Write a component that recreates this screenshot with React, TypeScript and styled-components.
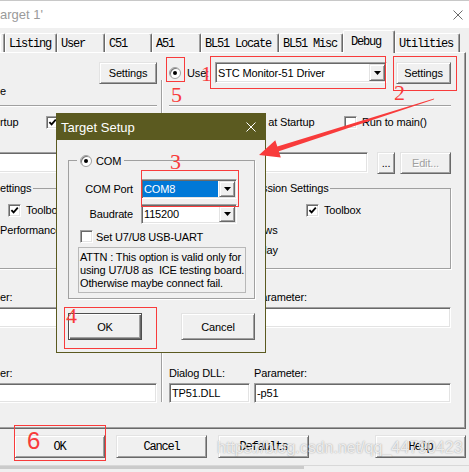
import React from 'react';
import styled, { createGlobalStyle, css } from 'styled-components';

const UI = '"Liberation Sans", Arial, sans-serif';
const MONO = '"Liberation Mono", "Courier New", monospace';
const SERIF = '"Liberation Serif", "Times New Roman", serif';
const RED = '#f83b3b';
const OLIVE = '#5b5a20';

const GlobalStyle = createGlobalStyle`
  html, body { margin: 0; padding: 0; background: #f0f0f0; }
  *, *::before, *::after { box-sizing: border-box; }
`;

const Screen = styled.div`
  position: relative;
  width: 469px;
  height: 472px;
  overflow: hidden;
  display: flex;
  flex-direction: column;
  background: #f0f0f0;
  color: #000;
  font-family: ${UI};
  font-size: 11px;
  letter-spacing: -0.15px;
`;

/* ---------- options window ---------- */

const TitleBar = styled.div`
  flex: none;
  height: 28px;
  display: flex;
  align-items: center;
  justify-content: space-between;
  padding-right: 6px;
  background: #fff;
  border-top: 1px solid #c8c8c8;
  color: #9a9a9a;
  font-size: 13px;
  letter-spacing: 0;
`;

const TabStrip = styled.div`
  flex: none;
  height: 22px;
  margin-top: 2px;
  display: flex;
  align-items: flex-end;
`;

const Tab = styled.div<{ $w: number; $active?: boolean }>`
  position: relative;
  z-index: ${p => (p.$active ? 1 : 0)};
  flex: none;
  width: ${p => p.$w}px;
  height: ${p => (p.$active ? 23 : 19)}px;
  margin-bottom: ${p => (p.$active ? -1 : 0)}px;
  display: flex;
  align-items: center;
  padding: ${p => (p.$active ? '0 0 0 7px' : '1px 0 0 3px')};
  background: #f0f0f0;
  border: 1px solid;
  border-bottom: none;
  border-color: #fff #696969 transparent #fff;
  border-radius: 2px 2px 0 0;
  box-shadow: inset -1px 0 0 #a0a0a0;
  font-family: ${MONO};
  font-size: 12px;
  letter-spacing: -1.2px;
  white-space: nowrap;
`;

const TabPage = styled.div`
  flex: none;
  width: 466px;
  height: 377px;
  display: grid;
  grid-template-columns: 161px 2px 1fr;
  border-top: 1px solid #fff;
  border-right: 1px solid #696969;
  border-bottom: 1px solid #696969;
  box-shadow: inset -1px -1px 0 #a0a0a0;
`;

const Column = styled.div<{ $left: number; $right: number }>`
  min-width: 0;
  display: flex;
  flex-direction: column;
  padding: 8px ${p => p.$right}px 0 ${p => p.$left}px;
`;

const Divider = styled.div`
  margin: 27px 0 26px;
  border-left: 1px solid #a0a0a0;
  border-right: 1px solid #fff;
`;

const UseRow = styled.div`
  flex: none;
  height: 23px;
  display: flex;
  align-items: center;
`;

const LimitRow = styled.div`
  flex: none;
  height: 14px;
  display: flex;
  align-items: center;
  white-space: nowrap;
`;

const Separator = styled.div`
  flex: none;
  height: 2px;
  margin-top: 7px;
  border-top: 1px solid #a0a0a0;
  border-bottom: 1px solid #fff;
`;

const CheckRow = styled.div<{ $first: number }>`
  flex: none;
  height: 18px;
  margin-top: 6px;
  display: grid;
  grid-template-columns: ${p => p.$first}px auto;
  align-items: center;
  white-space: nowrap;
`;

const InitLabel = styled.div`
  flex: none;
  height: 21px;
  display: flex;
  align-items: flex-end;
  padding-bottom: 3px;
  white-space: nowrap;
`;

const InitFieldRow = styled.div`
  flex: none;
  height: 22px;
  display: flex;
  align-items: flex-start;
`;

const GroupBox = styled.fieldset<{ $bleed?: boolean }>`
  flex: none;
  min-width: 0;
  margin: 7px 0 0 ${p => (p.$bleed ? -5 : 0)}px;
  padding: 4px 0 8px 2px;
  border: 1px solid #a0a0a0;
  box-shadow: 1px 1px 0 #fff;
`;

const Legend = styled.legend`
  padding: 0 2px;
  line-height: 15px;
  white-space: nowrap;
`;

const GroupRow = styled.div<{ $indent: number; $cols?: string }>`
  height: 20px;
  display: grid;
  grid-template-columns: ${p => p.$cols ?? 'auto'};
  align-items: center;
  padding-left: ${p => p.$indent}px;
  white-space: nowrap;
`;

const ParamGrid = styled.div<{ $cols: string; $top: number; $fieldH: number }>`
  flex: none;
  display: grid;
  grid-template-columns: ${p => p.$cols};
  grid-template-rows: 14px ${p => p.$fieldH}px;
  column-gap: 4px;
  row-gap: 3px;
  margin-top: ${p => p.$top}px;
  align-items: center;
  white-space: nowrap;
`;

const Field = styled.div<{ $bleed?: boolean; $h?: number }>`
  flex: 1;
  min-width: 0;
  align-self: stretch;
  ${p => p.$h && css`height: ${p.$h}px; align-self: flex-start;`}
  margin-left: ${p => (p.$bleed ? -3 : 0)}px;
  display: flex;
  align-items: center;
  padding: 0 2px;
  background: #fff;
  border: 1px solid;
  border-color: #a0a0a0 #fff #fff #a0a0a0;
  box-shadow: inset 1px 1px 0 #696969, inset -1px -1px 0 #e3e3e3;
  white-space: nowrap;
  overflow: hidden;
`;

const Button = styled.button<{
  $w: number;
  $h?: number;
  $gap?: number;
  $push?: boolean;
  $mono?: boolean;
  $default?: boolean;
  $disabled?: boolean;
}>`
  flex: none;
  width: ${p => p.$w}px;
  height: ${p => (p.$h ? `${p.$h}px` : 'auto')};
  margin: 0 0 0 ${p => (p.$push ? 'auto' : `${p.$gap ?? 0}px`)};
  padding: 0;
  display: flex;
  align-items: center;
  justify-content: center;
  background: #f0f0f0;
  border: 1px solid;
  border-color: #e3e3e3 #696969 #696969 #e3e3e3;
  box-shadow: inset 1px 1px 0 #fff, inset -1px -1px 0 #a0a0a0;
  font-family: ${p => (p.$mono ? MONO : UI)};
  font-size: ${p => (p.$mono ? 12 : 11)}px;
  letter-spacing: ${p => (p.$mono ? -1.2 : -0.15)}px;
  color: ${p => (p.$disabled ? '#a0a0a0' : '#000')};
  text-shadow: ${p => (p.$disabled ? '1px 1px 0 #fff' : 'none')};
  white-space: nowrap;
  ${p =>
    p.$default &&
    css`
      border-color: #4e4e4e;
      box-shadow: inset 1px 1px 0 #fff, inset -1px -1px 0 #696969, inset -2px -2px 0 #a0a0a0;
    `}
`;

const ButtonBar = styled.div`
  flex: none;
  height: 23px;
  margin-top: 6px;
  display: flex;
  gap: 11px;
  padding: 0 3px 0 14px;
`;

const Footer = styled.div`
  flex: none;
  height: 5px;
  margin-top: 7px;
  border-top: 1px solid #d8d8d8;
`;

const ScrollThumb = styled.div`
  width: 304px;
  height: 3px;
  background: #cbcbcb;
`;

/* ---------- controls ---------- */

const CheckItem = styled.span`
  display: flex;
  align-items: center;
  gap: 5px;
  white-space: nowrap;
`;

const CheckBox = styled.span`
  flex: none;
  width: 13px;
  height: 13px;
  display: inline-flex;
  align-items: center;
  justify-content: center;
  background: #fff;
  border: 1px solid;
  border-color: #a0a0a0 #fff #fff #a0a0a0;
  box-shadow: inset 1px 1px 0 #696969, inset -1px -1px 0 #e3e3e3;
`;

function Check({ checked }: { checked?: boolean }) {
  return (
    <CheckBox>
      {checked && (
        <svg width="9" height="9" viewBox="0 0 9 9">
          <path d="M1.4 4.1 L3.6 6.4 L7.8 1.7" fill="none" stroke="#000" strokeWidth="1.8" />
        </svg>
      )}
    </CheckBox>
  );
}

const Radio = styled.span<{ $on?: boolean }>`
  flex: none;
  width: 12px;
  height: 12px;
  border-radius: 50%;
  display: inline-flex;
  align-items: center;
  justify-content: center;
  background: #fff;
  border: 1px solid #a0a0a0;
  box-shadow: inset 1px 1px 0 #7a7a7a;
  &::after {
    content: '';
    display: ${p => (p.$on ? 'block' : 'none')};
    width: 4px;
    height: 4px;
    border-radius: 50%;
    background: #000;
  }
`;

const RadioLabel = styled.span`
  flex: none;
  width: 46px;
  display: flex;
  align-items: center;
  gap: 6px;
`;

const ComboFrame = styled.div<{ $w: number; $h: number }>`
  flex: none;
  width: ${p => p.$w}px;
  height: ${p => p.$h}px;
  display: flex;
  padding: 1px;
  background: #fff;
  border: 1px solid;
  border-color: #a0a0a0 #fff #fff #a0a0a0;
  box-shadow: inset 1px 1px 0 #696969, inset -1px -1px 0 #e3e3e3;
`;

const ComboValue = styled.div<{ $selected?: boolean }>`
  flex: 1;
  min-width: 0;
  display: flex;
  align-items: center;
  padding-left: 1px;
  margin-right: 1px;
  white-space: nowrap;
  overflow: hidden;
  background: ${p => (p.$selected ? '#0078d7' : 'transparent')};
  color: ${p => (p.$selected ? '#fff' : '#000')};
`;

const DropButton = styled.div`
  flex: none;
  width: 16px;
  display: flex;
  align-items: center;
  justify-content: center;
  background: #f0f0f0;
  border: 1px solid;
  border-color: #e3e3e3 #696969 #696969 #e3e3e3;
  box-shadow: inset 1px 1px 0 #fff, inset -1px -1px 0 #a0a0a0;
`;

function Combo({ w, h, value, selected }: { w: number; h: number; value: string; selected?: boolean }) {
  return (
    <ComboFrame $w={w} $h={h}>
      <ComboValue $selected={selected}>{value}</ComboValue>
      <DropButton>
        <svg width="7" height="4" viewBox="0 0 7 4">
          <path d="M0 0H7L3.5 4Z" fill="#000" />
        </svg>
      </DropButton>
    </ComboFrame>
  );
}

function CloseIcon({ color }: { color: string }) {
  return (
    <svg width="10" height="10" viewBox="0 0 10 10">
      <path d="M0.5 0.5L9.5 9.5M9.5 0.5L0.5 9.5" stroke={color} strokeWidth="1" />
    </svg>
  );
}

/* ---------- target setup dialog ---------- */

const Dialog = styled.div`
  position: absolute;
  left: 56px;
  top: 113px;
  z-index: 5;
  width: 210px;
  display: flex;
  flex-direction: column;
  background: #f0f0f0;
  border: 1px solid ${OLIVE};
`;

const DialogTitle = styled.div`
  height: 26px;
  display: flex;
  align-items: center;
  justify-content: space-between;
  padding: 0 9px 0 4px;
  background: ${OLIVE};
  color: #fff;
  font-size: 13px;
  letter-spacing: 0;
`;

const DialogBody = styled.div`
  display: flex;
  flex-direction: column;
  padding: 13px 10px 12px 11px;
`;

const ComGroup = styled.fieldset`
  min-width: 0;
  margin: 0;
  padding: 11px 8px 5px 10px;
  border: 1px solid #a0a0a0;
  box-shadow: 1px 1px 0 #fff;
`;

const ComLegend = styled.legend`
  display: flex;
  align-items: center;
  gap: 4px;
  height: 15px;
  margin-left: -2px;
  padding: 0 3px;
`;

const FormGrid = styled.div`
  display: grid;
  grid-template-columns: 54px 96px;
  grid-auto-rows: 20px;
  column-gap: 8px;
  row-gap: 5px;
  align-items: center;
`;

const FormLabel = styled.span`
  text-align: right;
  white-space: nowrap;
`;

const DialogCheckRow = styled.div`
  height: 15px;
  margin-top: 5px;
  padding-left: 1px;
  display: flex;
  align-items: center;
  gap: 3px;
  white-space: nowrap;
`;

const NoteBox = styled.div`
  margin: 3px 0 0 -1px;
  padding: 3px 1px 2px;
  border: 1px solid #b8b8b8;
  line-height: 13px;
  white-space: pre;
`;

const DialogButtons = styled.div`
  display: flex;
  justify-content: space-between;
  margin-top: 14px;
`;

/* ---------- annotations ---------- */

const Mark = styled.div<{ $x: number; $y: number; $w: number; $h: number }>`
  position: absolute;
  z-index: 10;
  left: ${p => p.$x}px;
  top: ${p => p.$y}px;
  width: ${p => p.$w}px;
  height: ${p => p.$h}px;
  border: 1px solid ${RED};
  pointer-events: none;
`;

const Numeral = styled.span<{ $x: number; $y: number; $sans?: boolean }>`
  position: absolute;
  z-index: 10;
  left: ${p => p.$x}px;
  top: ${p => p.$y}px;
  font-family: ${p => (p.$sans ? UI : SERIF)};
  font-size: ${p => (p.$sans ? 24 : 22)}px;
  line-height: 1;
  letter-spacing: 0;
  color: ${RED};
`;

const ArrowLayer = styled.svg`
  position: absolute;
  left: 0;
  top: 0;
  z-index: 11;
  pointer-events: none;
`;

const Watermark = styled.div`
  position: absolute;
  left: 217px;
  top: 440px;
  z-index: 12;
  font-family: ${UI};
  font-size: 16px;
  line-height: 16px;
  letter-spacing: 0;
  white-space: nowrap;
  color: rgba(255, 255, 255, 0.78);
  text-shadow: 0 0 1.5px rgba(0, 0, 0, 0.4);
`;

const TABS = [
  { label: 'Listing', w: 52 },
  { label: 'User', w: 48 },
  { label: 'C51', w: 47 },
  { label: 'A51', w: 49 },
  { label: 'BL51 Locate', w: 78 },
  { label: 'BL51 Misc', w: 64 },
  { label: 'Debug', w: 52, active: true },
  { label: 'Utilities', w: 65 },
];

const MARKS = [
  { x: 166, y: 57, w: 19, h: 25 },
  { x: 210, y: 56, w: 176, h: 33 },
  { x: 393, y: 56, w: 64, h: 35 },
  { x: 141, y: 170, w: 98, h: 37 },
  { x: 64, y: 307, w: 93, h: 42 },
  { x: 14, y: 425, w: 92, h: 36 },
];

export default function App() {
  return (
    <>
      <GlobalStyle />
      <Screen>
        <TitleBar>
          <span>arget 1'</span>
          <CloseIcon color="#6b6b6b" />
        </TitleBar>

        <TabStrip>
          <Tab $w={3} />
          {TABS.map(t => (
            <Tab key={t.label} $w={t.w} $active={t.active}>
              {t.label}
            </Tab>
          ))}
        </TabStrip>

        <TabPage>
          <Column $left={0} $right={4}>
            <UseRow>
              <Button $w={58} $h={22} $push>Settings</Button>
            </UseRow>
            <LimitRow>e</LimitRow>
            <Separator />
            <CheckRow $first={46}>
              <span>rtup</span>
              <CheckItem>
                <Check checked />
                Run to main()
              </CheckItem>
            </CheckRow>
            <InitLabel />
            <InitFieldRow>
              <Field $bleed $h={21} />
              <Button $w={18} $h={22} $gap={9}>...</Button>
              <Button $w={51} $h={22} $gap={5} $disabled>Edit...</Button>
            </InitFieldRow>
            <GroupBox $bleed>
              <Legend>ettings</Legend>
              <GroupRow $indent={10}>
                <CheckItem>
                  <Check checked />
                  Toolbox
                </CheckItem>
              </GroupRow>
              <GroupRow $indent={2}>Performance Analyzer</GroupRow>
              <GroupRow $indent={2} />
            </GroupBox>
            <ParamGrid $cols="1fr" $top={21} $fieldH={21}>
              <span>er:</span>
              <Field $bleed />
            </ParamGrid>
            <ParamGrid $cols="1fr" $top={38} $fieldH={20}>
              <span>er:</span>
              <Field $bleed />
            </ParamGrid>
          </Column>

          <Divider />

          <Column $left={6} $right={14}>
            <UseRow>
              <RadioLabel>
                <Radio $on />
                Use:
              </RadioLabel>
              <Combo w={172} h={21} value="STC Monitor-51 Driver" />
              <Button $w={55} $h={22} $push>Settings</Button>
            </UseRow>
            <LimitRow />
            <Separator />
            <CheckRow $first={175}>
              <CheckItem>
                <Check checked />
                Load Application at Startup
              </CheckItem>
              <CheckItem>
                <Check />
                Run to main()
              </CheckItem>
            </CheckRow>
            <InitLabel>Initialization File:</InitLabel>
            <InitFieldRow>
              <Field $h={21} />
              <Button $w={18} $h={22} $gap={9}>...</Button>
              <Button $w={51} $h={22} $gap={5} $disabled>Edit...</Button>
            </InitFieldRow>
            <GroupBox>
              <Legend>Restore Debug Session Settings</Legend>
              <GroupRow $indent={11} $cols="123px auto">
                <CheckItem>
                  <Check checked />
                  Breakpoints
                </CheckItem>
                <CheckItem>
                  <Check checked />
                  Toolbox
                </CheckItem>
              </GroupRow>
              <GroupRow $indent={11}>
                <CheckItem>
                  <Check checked />
                  Watch Windows
                </CheckItem>
              </GroupRow>
              <GroupRow $indent={11}>
                <CheckItem>
                  <Check checked />
                  Memory Display
                </CheckItem>
              </GroupRow>
            </GroupBox>
            <ParamGrid $cols="81px 1fr" $top={21} $fieldH={21}>
              <span>CPU DLL:</span>
              <span>Parameter:</span>
              <Field>S8051.DLL</Field>
              <Field />
            </ParamGrid>
            <ParamGrid $cols="81px 1fr" $top={38} $fieldH={20}>
              <span>Dialog DLL:</span>
              <span>Parameter:</span>
              <Field>TP51.DLL</Field>
              <Field>-p51</Field>
            </ParamGrid>
          </Column>
        </TabPage>

        <ButtonBar>
          <Button $w={91} $mono>OK</Button>
          <Button $w={91} $mono>Cancel</Button>
          <Button $w={91} $mono>Defaults</Button>
          <Button $w={91} $mono $push>Help</Button>
        </ButtonBar>
        <Footer>
          <ScrollThumb />
        </Footer>

        <Dialog>
          <DialogTitle>
            <span>Target Setup</span>
            <CloseIcon color="#fff" />
          </DialogTitle>
          <DialogBody>
            <ComGroup>
              <ComLegend>
                <Radio $on />
                COM
              </ComLegend>
              <FormGrid>
                <FormLabel>COM Port</FormLabel>
                <Combo w={96} h={20} value="COM8" selected />
                <FormLabel>Baudrate</FormLabel>
                <Combo w={96} h={20} value="115200" />
              </FormGrid>
              <DialogCheckRow>
                <Check />
                Set U7/U8 USB-UART
              </DialogCheckRow>
              <NoteBox>
                <div>ATTN : This option is valid only for</div>
                <div>using U7/U8 as  ICE testing board.</div>
                <div>Otherwise maybe connect fail.</div>
              </NoteBox>
            </ComGroup>
            <DialogButtons>
              <Button $w={74} $h={27} $default>OK</Button>
              <Button $w={74} $h={27}>Cancel</Button>
            </DialogButtons>
          </DialogBody>
        </Dialog>

        {MARKS.map((m, i) => (
          <Mark key={i} $x={m.x} $y={m.y} $w={m.w} $h={m.h} />
        ))}
        <Numeral $x={201} $y={63}>1</Numeral>
        <Numeral $x={394} $y={82}>2</Numeral>
        <Numeral $x={170} $y={151}>3</Numeral>
        <Numeral $x={66} $y={305}>4</Numeral>
        <Numeral $x={171} $y={84}>5</Numeral>
        <Numeral $x={27} $y={429} $sans>6</Numeral>

        <ArrowLayer width="469" height="472" viewBox="0 0 469 472">
          <polygon
            points="259,155 275.3,140.3 277.3,146.5 434.2,98.5 433.8,99.6 278.8,151.3 280.8,157.5"
            fill={RED}
          />
        </ArrowLayer>

        <Watermark>https://blog.csdn.net/qq_44790423</Watermark>
      </Screen>
    </>
  );
}
